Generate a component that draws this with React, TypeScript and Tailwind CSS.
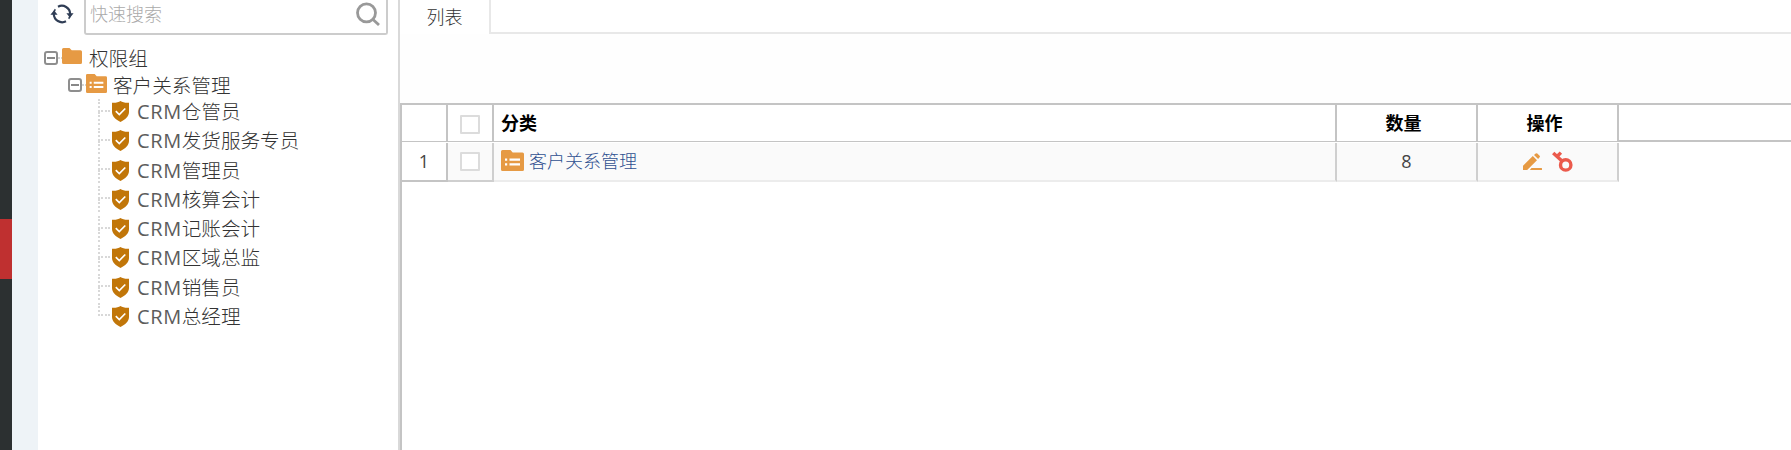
import clsx from "clsx";

// ---------------------------------------------------------------------------
// Data
// ---------------------------------------------------------------------------

const ROLES = [
  "仓管员",
  "发货服务专员",
  "管理员",
  "核算会计",
  "记账会计",
  "区域总监",
  "销售员",
  "总经理",
];

const ROWS = [{ id: 1, name: "客户关系管理", count: 8 }];

// ---------------------------------------------------------------------------
// Icons
// ---------------------------------------------------------------------------

function RefreshIcon() {
  return (
    <svg className="h-[22px] w-[24px] shrink-0" viewBox="0 0 24 22" fill="none">
      <path d="M8 3.700A8.400 8.400 0 0 1 20.200 11M3.800 11A8.400 8.400 0 0 0 16 18.300" stroke="#2f3d55" strokeWidth="2.200" />
      <path d="M3.800 11.500A8.400 8.400 0 0 1 5.300 6.200M20.200 10.500A8.400 8.400 0 0 1 18.700 15.800" stroke="#2f3d55" strokeWidth="1.500" />
      <path d="M.4 11.800 4 7.300l3.600 4.500ZM23.600 10.200 20 14.700l-3.600-4.500Z" fill="#2f3d55" />
    </svg>
  );
}

function SearchIcon() {
  return (
    <svg className="h-6 w-6 shrink-0" viewBox="0 0 24 24" fill="none" stroke="#999" strokeWidth="2.8">
      <circle cx="10.500" cy="10.800" r="9" />
      <path d="m17 17.500 6 5.500" />
    </svg>
  );
}

function FolderIcon() {
  return (
    <svg className="mb-[4px] h-4 w-5 shrink-0" viewBox="0 0 20 16">
      <path d="M1.500 0h6l2.200 2.300h8.800A1.500 1.500 0 0 1 20 3.800v10.700a1.500 1.500 0 0 1-1.500 1.500h-17A1.500 1.500 0 0 1 0 14.500v-13A1.500 1.500 0 0 1 1.500 0Z" fill="#e69a44" />
    </svg>
  );
}

function ListFolderIcon({ className }: { className: string }) {
  return (
    <svg className={clsx("shrink-0", className)} viewBox="0 0 23 21" preserveAspectRatio="none">
      <path d="M1.500 0h8l2.200 2.500h9.800A1.500 1.500 0 0 1 23 4v15.500a1.500 1.500 0 0 1-1.500 1.500h-20A1.500 1.500 0 0 1 0 19.500v-18A1.500 1.500 0 0 1 1.500 0Z" fill="#e69a44" />
      <path d="M4 8.500h2.200v2.200H4ZM8.500 8.500H19v2.200H8.500ZM4 13.300h2.200v2.200H4ZM8.500 13.300H19v2.200H8.500Z" fill="#fff" />
    </svg>
  );
}

function ShieldIcon() {
  return (
    <svg className="h-[21px] w-[17px] shrink-0" viewBox="0 0 17 21">
      <path d="M8.500 0C6.500 1.300 3.500 2 0 1.700V11c0 4.500 3.800 7.600 8.500 10 4.700-2.400 8.500-5.500 8.500-10V1.700C13.500 2 10.500 1.300 8.500 0Z" fill="#c17609" />
      <path d="m3.800 10.100 3.500 3.400 6-6" fill="none" stroke="#fff" strokeWidth="1.700" />
    </svg>
  );
}

function PencilIcon() {
  return (
    <svg className="h-[18px] w-[19px]" viewBox="0 0 19 18" fill="#e69a44">
      <path d="M0 12.800 9.800 3l4.200 4.200L4.200 17H0ZM11 2.100 12.700.5q.8-.7 1.600 0l2.300 2.300q.7.7 0 1.500L15.100 6ZM8.500 15.100h9.800a.9.900 0 0 1 0 1.900H6.800Z" />
    </svg>
  );
}

function KeyIcon() {
  return (
    <svg className="h-[21px] w-[21px]" viewBox="0 0 21 21" fill="none" stroke="#eb5a4c" strokeWidth="3.400">
      <circle cx="13.700" cy="13.900" r="5.200" />
      <path d="M1.200 1.900 10 10M5 5.500l3.900-3.900" />
    </svg>
  );
}

// ---------------------------------------------------------------------------
// Tree parts
// ---------------------------------------------------------------------------

function Toggle() {
  return (
    <span className="flex h-[14px] w-[14px] shrink-0 items-center justify-center rounded-[3px] border-2 border-[#8e8e8e]">
      <span className="h-[2px] w-[8px] bg-[#888]" />
    </span>
  );
}

function RoleItem({ label, last }: { label: string; last: boolean }) {
  return (
    <li className="flex h-[29.250px] items-center">
      <span className="flex h-[26px] w-[14px] shrink-0 flex-col">
        <span className="h-[13px] w-[12px] border-b-2 border-l-2 border-dotted border-[#d8d8d8]" />
        {!last && <span className="h-[13px] border-l-2 border-dotted border-[#d8d8d8]" />}
      </span>
      <ShieldIcon />
      <span className="ml-[8px]">
        <span className="text-[20px] font-normal tracking-[0.6px] text-[#5c5c5c]">CRM</span>
        {label}
      </span>
    </li>
  );
}

function Checkbox() {
  return <span className="block h-[19px] w-[20px] rounded-[1px] border-2 border-[#dcdcdc] bg-white" />;
}

// ---------------------------------------------------------------------------
// Page
// ---------------------------------------------------------------------------

export default function App() {
  return (
    <div className="flex h-[450px] w-full overflow-hidden bg-white font-['Open_Sans','Noto_Sans_CJK_SC',sans-serif] font-light text-[#333]">
      {/* Dark navigation strip */}
      <nav className="w-[12px] shrink-0 bg-[#2c3031] pt-[219px]">
        <div className="h-[60px] bg-[#bf3030]" />
      </nav>
      <div className="w-[26px] shrink-0 bg-[#eef3f7]" />

      {/* Permission tree */}
      <aside className="w-[362px] shrink-0 border-r-2 border-[#d9d9d9]">
        <div className="flex h-[35px] items-start">
          <div className="w-[46px] pt-[3px] pl-[12px]">
            <RefreshIcon />
          </div>
          <div className="flex h-[35px] w-[304px] items-center justify-between rounded-b-[3px] border-2 border-t-0 border-[#ccc] pr-[6px] pb-[6px] pl-[4px] text-[18px] text-[#aaa]">
            <span className="pt-[2px]">快速搜索</span>
            <SearchIcon />
          </div>
        </div>
        <div className="text-[19.600px] leading-[27px] whitespace-nowrap">
          <div className="mt-[9px] flex h-[27px] items-center pt-px pl-[6px]">
            <Toggle />
            <span className="mr-[1px] w-[3px] border-b-2 border-dotted border-[#d4d4d4]" />
            <FolderIcon />
            <span className="ml-[7px]">权限组</span>
          </div>
          <div className="flex h-[27px] items-center pt-px pl-[30px]">
            <Toggle />
            <span className="mr-[1px] w-[3px] border-b-2 border-dotted border-[#d4d4d4]" />
            <ListFolderIcon className="mb-[4px] h-[19px] w-[21px]" />
            <span className="ml-[6px]">客户关系管理</span>
          </div>
          <ul className="-mt-[1px] pl-[60px]">
            {ROLES.map((role, i) => (
              <RoleItem key={role} label={role} last={i === ROLES.length - 1} />
            ))}
          </ul>
        </div>
      </aside>

      {/* Content */}
      <main className="flex min-w-0 flex-1 flex-col">
        <div className="flex h-[34px] shrink-0">
          <div className="flex w-[89px] items-center justify-center pt-px text-[18px]">列表</div>
          <div className="flex-1 border-b-2 border-l-2 border-[#e8e8e8]" />
        </div>
        <div className="h-[69px] shrink-0 bg-[#fefefe]" />

        <div className="flex-1 border-t-2 border-l-2 border-[#c4c4c4] text-[18px] whitespace-nowrap">
          {/* Header row */}
          <div className="flex h-[37px] font-bold text-black">
            <div className="w-[46px] border-r-2 border-b border-[#c4c4c4]" />
            <div className="flex w-[46px] items-center justify-center border-r-2 border-b border-[#c4c4c4] pt-[2px]">
              <Checkbox />
            </div>
            <div className="flex w-[843px] items-center border-r-2 border-b border-[#c4c4c4] pt-px pl-[7px]">分类</div>
            <div className="flex w-[141px] items-center justify-center border-r-2 border-b border-[#c4c4c4] pt-px pr-[6px]">数量</div>
            <div className="flex w-[141px] items-center justify-center border-r-2 border-b border-[#c4c4c4] pt-px pr-[6px]">操作</div>
            <div className="flex-1 border-b-2 border-[#c4c4c4]" />
          </div>

          {ROWS.map((row) => (
            <div key={row.id} className="flex h-[40px] pt-[1px]">
              <div className="flex w-[46px] items-center justify-center border-r-2 border-b-2 border-[#c4c4c4] font-normal text-[#444]">
                {row.id}
              </div>
              <div className="flex w-[46px] items-center justify-center border-r-2 border-b-2 border-[#cfcfcf] bg-[#fafafa]">
                <Checkbox />
              </div>
              <div className="flex w-[843px] items-center border-r-2 border-b-2 border-r-[#cfcfcf] border-b-[#ececec] bg-[#fafafa] pl-[7px] text-[#2f5090]">
                <ListFolderIcon className="mb-[2px] h-[21px] w-[23px]" />
                <span className="ml-[5px]">{row.name}</span>
              </div>
              <div className="flex w-[141px] items-center justify-center border-r-2 border-b-2 border-r-[#cfcfcf] border-b-[#ececec] bg-[#fafafa] font-normal text-[#444]">
                {row.count}
              </div>
              <div className="flex w-[141px] items-center justify-center gap-[10px] border-r-2 border-b-2 border-r-[#cfcfcf] border-b-[#ececec] bg-[#fafafa]">
                <PencilIcon />
                <KeyIcon />
              </div>
            </div>
          ))}
        </div>
      </main>
    </div>
  );
}
